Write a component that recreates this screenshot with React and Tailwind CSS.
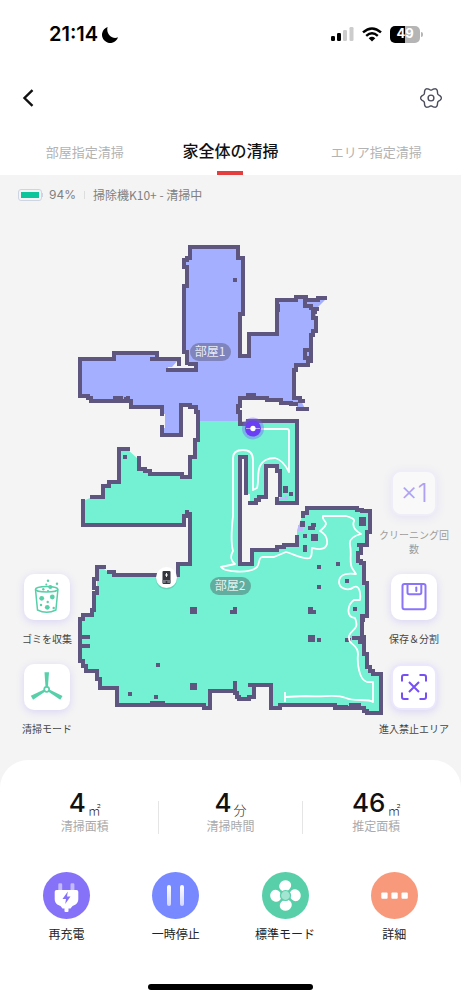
import React from "react";

const ROOM_ONE =
  "M190 247H238V258H243V314H240V356H249V334H277V300H296V297H306V300H318L325 300L316 309V331L311 337V361H308V365H296V370H294V398H300L305 409H298L296 404L281 402L267 399H240V405H238V412H240V422H198V412L196 407L190 405H181V435H162V428H165V414H162V407H131V401H91V396H80V359H114V353H157V359H179L172 367H168V370H196V364H187V352H184V286H187V266H184V260L187 258H190Z";

const ROOM_TWO =
  "M198 421H297V503H277V499H280V471H277V466H266V497L258 500L250 503V494H246V456H240V564H252V550H277V547H283V545H297V530L303 514L307 508H357L362 510H370V532H367V545H361V553H358V560L364 563V583H367V616H361V637H364V654H367V669L371 673H381V713H367L364 710V707H335V705H280V707H271V685H254V697H249V699H239L235 693V691H210V707H204V705H117V688H100V679H97V671H86V666H83V661H80V619H83V615H92V610H94V593H97V567H101L110 573H114V575H178V564H190V516H186V525H83V501L90 498L92 497H103V486L109 482H119V449H127L137 458H139V469H145V471L151 474H182V477H190V457H195V440H198Z";

const WALLS = [
  "M187 363V352H184V286H187V267H184V260H187V258H190V247H238V258H243V314H240V356H249V334H277V300H296V297H306V300H318V298H325",
  "M305 300V306H311V308",
  "M317 309H315V312H313V318H316V331H313V335H311V361H308V365H296V370H294V398H300V401H303",
  "M309 350H305V358H309",
  "M298 409H307",
  "M296 404H291V403H281V400H267V398H240V406H238V412H240V424H248V421H297V503H277V499",
  "M248 395H254",
  "M278 306V310",
  "M280 495V471H277V466H266V497H259V500H256V503H250",
  "M246 493V457H240V564H252V550H277V547H284V545H297V537",
  "M303 516V513H307V508H357V510H362V511H370V532H367V545H359",
  "M361 545V553H358V561H361V563H364V583H367V616H362V637H364V654H367V667H370V671H373V674H381V713H367V711H364V708H335V705H280V708H271V685H250",
  "M364 638H354M360 638V642M363 616V620M339 707H346M351 705H359",
  "M254 685V697H249V699H239V697H237V693H235V683M235 691H210V708H204V705H117V688H100V679H97V671H86V666H83V661H80V619H83V615H92V610H94V593H97V588H94V579H97V567H104",
  "M152 703H163",
  "M80 637H88M80 646H88",
  "M109 572H114V575H178V564H190V514H187V512M190 516H184V525H83V501",
  "M92 497H103V486H109V482H119V449H128",
  "M139 458V469H145V471H150V474H182V477H190V457H195V440H198V412H196V407H190V405H181V435H162V427",
  "M162 414V407H131V401H128V398M126 399V401H115M121 398H115V401H91V398H88V396H80V359H114V353H157V359H179V364",
  "M152 359H158",
  "M168 370H196V364H190",
];

const OBSTACLES = [
  [233, 278, 4, 4], [123, 455, 4, 4], [283, 486, 5, 7], [289, 492, 4, 4],
  [300, 521, 5, 6], [308, 526, 7, 4], [311, 523, 5, 4], [303, 534, 4, 4],
  [311, 534, 7, 7], [303, 545, 4, 7], [359, 517, 7, 9], [317, 565, 4, 4],
  [336, 562, 4, 4], [317, 585, 4, 4], [345, 579, 4, 4], [353, 607, 4, 4],
  [190, 607, 7, 7], [230, 610, 7, 4], [233, 607, 4, 4], [308, 607, 5, 7],
  [312, 610, 4, 4], [308, 635, 7, 7], [317, 638, 4, 4], [345, 638, 6, 4],
  [190, 683, 7, 7], [156, 663, 4, 4], [128, 692, 4, 4], [154, 695, 4, 4],
];

const TRAILS = [
  "M253 429H287Q289 429 289 431V472Q283 460 275 458C268 458 262 461 260 466C257 472 259 482 257 488L253 490L253 460C253 453 249 450 243 450C237 450 233 452 233 458V516C231 534 231 544 233 551C230 556 231 561 235 564L221 567C223 572 250 574 257 567C260 564 258 558 262 557H274L286 552C294 554 303 560 310 558C313 555 311 552 312 548C317 549 325 551 327 544C328 536 324 533 320 531C322 529 325 528 326 524C326 520 322 521 323 516H346C350 517 355 519 354 521C352 526 354 530 361 534C353 536 349 540 350 545C352 554 349 562 352 568L356 574C350 573 339 573 339 582C339 588 348 592 354 587C359 585 361 592 360 600H354C348 604 345 617 355 618C360 630 351 629 349 636C348 646 358 643 358 654C357 663 359 680 367 682H373V702C368 698 354 702 346 698C334 693 324 698 306 696L285 697",
  "M285 692V702",
];

const GEAR = (() => {
  const points = [];
  for (let i = 0; i < 120; i += 1) {
    const a = (i / 120) * Math.PI * 2;
    const r = 9.1 + 1.2 * Math.cos(6 * a);
    points.push(`${(12 + r * Math.cos(a)).toFixed(2)} ${(12 + r * Math.sin(a)).toFixed(2)}`);
  }
  return `M${points.join("L")}Z`;
})();

function StatusBar() {
  return (
    <div className="flex h-[68px] items-center justify-between pr-[38px] pl-[49px]">
      <div className="flex items-center gap-1 font-['Inter',sans-serif] text-xl leading-6 font-semibold text-black">
        21:14
        <svg width="17" height="17" viewBox="0 0 17 17" aria-hidden="true">
          <path d="M5.6 1A8.2 8.2 0 1 0 16 11.3C10.5 13.8 3.6 8.5 5.6 1Z" fill="#000" />
        </svg>
      </div>
      <div className="flex items-center">
        <svg width="24" height="16" viewBox="0 0 24 16" aria-hidden="true">
          <rect x="1" y="10" width="4" height="5" rx="1.2" />
          <rect x="7" y="7" width="4" height="8" rx="1.2" />
          <rect x="13" y="4" width="4" height="11" rx="1.2" fill="#ccc" />
          <rect x="19.5" y="1" width="4" height="14" rx="1.2" fill="#ccc" />
        </svg>
        <svg className="ml-2" width="20" height="15" viewBox="0 0 20 15" aria-hidden="true">
          <g fill="none" stroke="#000" strokeWidth="2.4">
            <path d="M1 5.4Q10-2.6 19 5.4" />
            <path d="M4.2 8.9Q10 3.7 15.8 8.9" />
          </g>
          <path d="M10 14.5L6.7 11.2Q10 8.5 13.3 11.2Z" />
        </svg>
        <span className="ml-2 flex h-[17px] w-[30px] items-center justify-center rounded-[5px] bg-linear-to-r from-black from-50% to-[#b5b5b5] to-50% font-['Inter',sans-serif] text-[13px] font-bold text-white">
          49
        </span>
        <span className="ml-px h-[5px] w-0.5 rounded-r bg-[#b5b5b5]" />
      </div>
    </div>
  );
}

function Header() {
  return (
    <header>
      <StatusBar />
      <div className="flex h-[60px] items-center justify-between px-[18px]">
        <button type="button" aria-label="戻る" className="flex size-5 items-center justify-center">
          <svg width="12" height="18" viewBox="0 0 12 18" fill="none" stroke="#111" strokeWidth="2.4" aria-hidden="true">
            <path d="M10.5 1.2L2.5 9L10.5 16.8" />
          </svg>
        </button>
        <button type="button" aria-label="設定">
          <svg width="24" height="24" viewBox="0 0 24 24" fill="none" stroke="#4a4c5c" strokeWidth="1.4" aria-hidden="true">
            <path d={GEAR} />
            <circle cx="12" cy="12" r="2.9" />
          </svg>
        </button>
      </div>
      <nav className="grid h-[47px] grid-cols-3 px-3 text-[13px] text-[#b3b3b3]">
        <a href="#rooms" className="flex items-center justify-center">部屋指定清掃</a>
        <a href="#home" aria-current="page" className="flex flex-col items-center justify-between pt-2.5 text-base leading-6 font-medium text-[#111]">
          家全体の清掃
          <span className="h-1 w-[26px] bg-[#e53e3e]" />
        </a>
        <a href="#areas" className="flex items-center justify-center">エリア指定清掃</a>
      </nav>
    </header>
  );
}

function RoomLabel({ x, y, children }) {
  return (
    <g>
      <rect x={x - 20} y={y - 9} width="41" height="18" rx="9" fill="#3c3746" fillOpacity="0.36" />
      <text x={x} y={y + 4} textAnchor="middle" fontSize="12" fill="#fff" fillOpacity="0.85">
        {children}
      </text>
    </g>
  );
}

function FloorMap() {
  return (
    <svg viewBox="0 215 461 545" className="block w-full" role="img" aria-label="清掃マップ">
      <path d={ROOM_ONE} fill="#a4afff" />
      <path d={ROOM_TWO} fill="#74f1d2" />
      <path d="M278 498h7v-2h3v4h-10z M298 525h5v6h-5z" fill="#bdb9fb" />
      <path d="M173 367h7v-7h5v6h6v2h-18z" fill="#f4f4f4" />
      <g fill="none" stroke="#5f5680" strokeWidth="4" strokeLinecap="square">
        {WALLS.map((d) => (
          <path key={d} d={d} />
        ))}
      </g>
      <g fill="#5f5680">
        {OBSTACLES.map(([x, y, w, h]) => (
          <rect key={`${x}-${y}`} x={x} y={y} width={w} height={h} />
        ))}
      </g>
      <g fill="none" stroke="#fff" strokeWidth="1.8" strokeLinejoin="round">
        {TRAILS.map((d) => (
          <path key={d} d={d} />
        ))}
      </g>
      <circle cx="253" cy="428.5" r="11" fill="#7a5cff" fillOpacity="0.4" />
      <circle cx="253" cy="428.5" r="8" fill="#6b3df5" />
      <path d="M246 428.5h14" stroke="#b9a3ff" />
      <circle cx="253" cy="428.5" r="2.7" fill="#fff" />
      <circle cx="166.5" cy="578.5" r="10.8" fill="#000" fillOpacity="0.12" />
      <circle cx="166.5" cy="577.5" r="10.5" fill="#fff" />
      <rect x="162.5" y="571" width="8" height="13" rx="1" fill="#34353d" />
      <path d="M162.5 580h8v3h-8z" fill="#777982" />
      <circle cx="166.5" cy="582" r="1" fill="#34353d" />
      <path d="M166.5 573v4M165 575h3" stroke="#fff" strokeWidth="0.9" />
      <RoomLabel x={210} y={352}>部屋1</RoomLabel>
      <RoomLabel x={230} y={586}>部屋2</RoomLabel>
    </svg>
  );
}

function BucketIcon() {
  const dots = [
    [17.7, 24.3, 2.4], [28.3, 23, 2.4], [23.3, 33.3, 2.4], [17, 31, 1.2], [23.7, 28, 1.2],
    [29.7, 34, 1.2], [26.3, 13, 2], [19.3, 15.3, 1.2], [24, 17, 1.1], [24, 6.7, 1.2],
    [33, 9.7, 1.2], [22.3, 10.5, 1],
  ];
  return (
    <svg width="46" height="46" viewBox="0 0 46 46" fill="#57cfa9" aria-hidden="true">
      <g fill="none" stroke="#57cfa9" strokeWidth="1.5">
        <ellipse cx="22.7" cy="15.3" rx="11.2" ry="2.8" />
        <path d="M11.5 15.5L13.5 36Q22.7 40.5 31.9 36L33.9 15.5" />
      </g>
      {dots.map(([x, y, r]) => (
        <circle key={`${x}-${y}`} cx={x} cy={y} r={r} />
      ))}
    </svg>
  );
}

function PropellerIcon() {
  const blade = "M20.5 8.3H25L23.9 23H21.5Z";
  return (
    <svg width="46" height="46" viewBox="0 0 46 46" fill="#57cfa9" aria-hidden="true">
      <path d={blade} />
      <path d={blade} transform="rotate(120 22.7 25.3)" />
      <path d={blade} transform="rotate(240 22.7 25.3)" />
      <circle cx="22.7" cy="25.3" r="2.5" fill="#fff" stroke="#57cfa9" strokeWidth="1.7" />
    </svg>
  );
}

function SaveIcon() {
  return (
    <svg width="46" height="46" viewBox="0 0 46 46" fill="none" stroke="#8b74fa" strokeWidth="2" aria-hidden="true">
      <rect x="11.5" y="10" width="23" height="25.3" rx="2" />
      <path d="M16.5 10V18.5Q16.5 20.3 18.3 20.3H28.5Q30.3 20.3 30.3 18.5V10" />
      <path d="M25.3 13.5V17" strokeLinecap="round" />
    </svg>
  );
}

function ForbiddenIcon() {
  return (
    <svg width="46" height="46" viewBox="0 0 46 46" className="shrink-0" fill="none" stroke="#7650f5" strokeWidth="2" aria-hidden="true">
      <path d="M11 17.5V13Q11 11 13 11H17.5M28.5 11H33Q35 11 35 13V17.5M35 28.5V33Q35 35 33 35H28.5M17.5 35H13Q11 35 11 33V28.5" />
      <path d="M18 18L28 28M28 18L18 28" />
    </svg>
  );
}

function MapControl({ label, disabled, outlined, children }) {
  return (
    <button type="button" disabled={disabled} className="flex w-full flex-col items-center gap-3 text-[10px] leading-[14px] text-[#444] disabled:opacity-50">
      <span className={`flex size-[46px] items-center justify-center rounded-[10px] bg-white shadow-[0_2px_8px_#d9d3f5] ${outlined ? "border-2 border-[#ebe7fc]" : ""}`}>
        {children}
      </span>
      <span>{label}</span>
    </button>
  );
}

function Stat({ value, unit, label }) {
  return (
    <div className="flex flex-col items-center">
      <dt className="order-2 text-xs leading-4 text-[#aaa]">{label}</dt>
      <dd className="flex h-[30px] items-end gap-0.5 text-[#222]">
        <span className="font-['Inter',sans-serif] text-[26px] leading-[30px] font-medium text-[#111]">{value}</span>
        <span className="text-[13px] leading-4 font-light">{unit}</span>
      </dd>
    </div>
  );
}

function Action({ label, color, children }) {
  return (
    <button type="button" className="flex flex-col items-center gap-[7px] text-xs leading-4 text-[#222]">
      <span className={`size-[47px] rounded-full ${color}`}>
        <svg width="47" height="47" viewBox="0 0 47 47" fill="#fff" aria-hidden="true">
          {children}
        </svg>
      </span>
      {label}
    </button>
  );
}

function BottomSheet() {
  const petal = "M22.5 20C18 18.5 16.5 15.5 17.5 12.5C18.8 8.5 24 7 27 9.3C30.5 12 29.5 16 26 18.5Z";
  return (
    <section className="rounded-t-[28px] bg-white px-3 pt-7 pb-2.5">
      <dl className="grid grid-cols-3">
        <Stat value="4" unit="㎡" label="清掃面積" />
        <div className="relative before:absolute before:bottom-0 before:left-0 before:h-[33px] before:w-px before:bg-[#e5e5e5] after:absolute after:right-0 after:bottom-0 after:h-[33px] after:w-px after:bg-[#e5e5e5]">
          <Stat value="4" unit="分" label="清掃時間" />
        </div>
        <Stat value="46" unit="㎡" label="推定面積" />
      </dl>
      <div className="mt-[38px] grid grid-cols-4">
        <Action label="再充電" color="bg-[#8672f8]">
          <path d="M15.3 12.5Q15.3 11.3 16.5 11.3H18Q19.2 11.3 19.2 12.5V18H15.3ZM27.5 12.5Q27.5 11.3 28.7 11.3H30.2Q31.4 11.3 31.4 12.5V18H27.5Z" fillOpacity="0.5" />
          <path d="M13.5 18H33.5Q35.3 18 35.3 19.8V27C35.3 31 32.5 33 29.5 34L27.5 36.5H25.5V39Q25.5 40 24.5 40H22.5Q21.5 40 21.5 39V36.5H19.5L17.5 34C14.5 33 11.7 31 11.7 27V19.8Q11.7 18 13.5 18Z" />
          <path d="M24.8 19.5L19.5 27H23L22.2 32L27.5 24.6H24Z" fill="#8672f8" />
        </Action>
        <Action label="一時停止" color="bg-[#7889ff]">
          <defs>
            <linearGradient id="pause" x1="0" y1="0" x2="0" y2="1">
              <stop offset="0" stopColor="#fff" />
              <stop offset="1" stopColor="#d3d7ff" />
            </linearGradient>
          </defs>
          <rect x="15" y="13" width="4" height="21" rx="2" fill="url(#pause)" />
          <rect x="28" y="13" width="4" height="21" rx="2" fill="url(#pause)" />
        </Action>
        <Action label="標準モード" color="bg-[#59cfa9]">
          <path d={petal} />
          <path d={petal} transform="rotate(90 23.5 23.5)" />
          <path d={petal} transform="rotate(180 23.5 23.5)" />
          <path d={petal} transform="rotate(270 23.5 23.5)" />
          <circle cx="23.5" cy="23.5" r="5" fill="#a3e5d0" stroke="#59cfa9" strokeWidth="1.2" />
        </Action>
        <Action label="詳細" color="bg-[#f8997c]">
          <rect x="10.3" y="20.5" width="6.3" height="6.3" rx="1" />
          <rect x="20.4" y="20.5" width="6.3" height="6.3" rx="1" />
          <rect x="30.5" y="20.5" width="6.3" height="6.3" rx="1" />
        </Action>
      </div>
      <div className="mx-auto mt-[42px] h-1.5 w-[165px] rounded-full bg-black" />
    </section>
  );
}

export default function App() {
  return (
    <main className="min-h-screen bg-white font-['Noto_Sans_CJK_JP',sans-serif]">
      <Header />
      <div className="bg-[#f4f4f4]">
        <div className="flex h-10 items-center px-[18px] text-xs text-[#808080]">
          <span className="flex h-[12px] w-6 rounded-[3px] border border-[#cdd5e3] p-0.5">
            <span className="w-full bg-[#0dc59b]" />
          </span>
          <span className="h-1 w-px bg-[#cdd5e3]" />
          <span className="ml-1.5 font-['Inter',sans-serif]">94%</span>
          <span className="mx-2 h-2 w-px bg-[#ddd]" />
          <span>掃除機K10+ - 清掃中</span>
        </div>
        <div className="relative">
          <FloorMap />
          <div className="absolute bottom-6 left-3 flex w-[70px] flex-col gap-[18px]">
            <MapControl label="ゴミを収集"><BucketIcon /></MapControl>
            <MapControl label="清掃モード"><PropellerIcon /></MapControl>
          </div>
          <div className="absolute right-3 bottom-6 flex w-[70px] flex-col gap-[18px]">
            <MapControl label="クリーニング回数" disabled outlined>
              <span className="font-['Inter',sans-serif] text-[26px] font-light text-[#6f4ef5]">×1</span>
            </MapControl>
            <MapControl label="保存＆分割"><SaveIcon /></MapControl>
            <MapControl label="進入禁止エリア" outlined><ForbiddenIcon /></MapControl>
          </div>
        </div>
        <BottomSheet />
      </div>
    </main>
  );
}
